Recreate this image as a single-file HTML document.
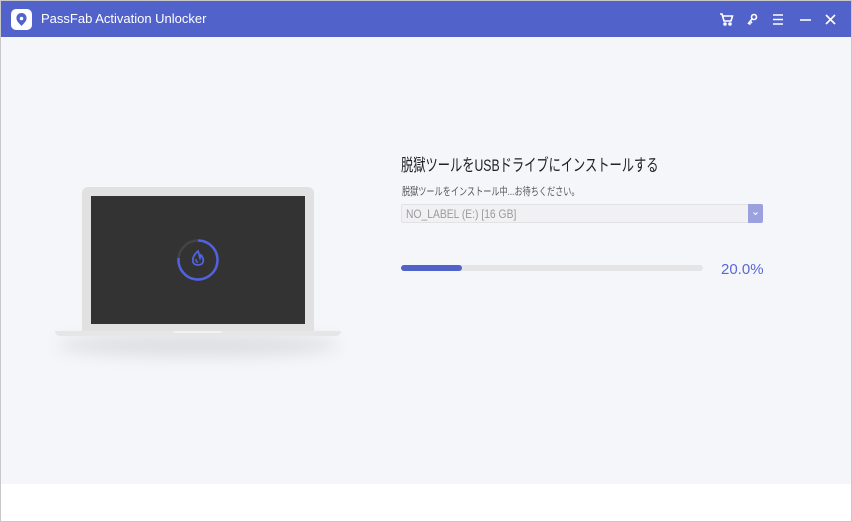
<!DOCTYPE html>
<html><head><meta charset="utf-8"><style>
*{margin:0;padding:0;box-sizing:border-box}
body{width:852px;height:522px;background:#c8c8c8;font-family:"Liberation Sans","Noto Sans CJK JP",sans-serif;position:relative;overflow:hidden}
.win{position:absolute;left:1px;top:1px;width:850px;height:520px;background:#fff}
.hd{position:absolute;left:0;top:0;width:850px;height:36px;background:#5162cb;color:#fff}
.logo{position:absolute;left:10px;top:8px;width:21px;height:21px;background:#fff;border-radius:5px}
.title{position:absolute;left:40px;top:10px;font-size:13px}
.main{position:absolute;left:0;top:36px;width:850px;height:447px;background:#f5f6fa}
.t{position:absolute;color:#222;white-space:nowrap;transform-origin:0 0}
</style></head><body><div class="win">
<div class="hd">
<div class="logo"><svg width="21" height="21"><path d="M10.5 4 C7 4 5 7 5.5 10 C6 13 9 15 10.5 17 C12 15 15 13 15.5 10 C16 7 14 4 10.5 4Z" fill="#5162cb"/><circle cx="10.5" cy="9.5" r="1.8" fill="#fff"/></svg></div>
<div class="title">PassFab Activation Unlocker</div>
<svg style="position:absolute;left:716px;top:10px" width="120" height="18" fill="none" stroke="#fff" stroke-width="1.6">
<path d="M3 3h2l2 7h7l1.5-5H6"/><circle cx="8" cy="13" r="1" fill="#fff"/><circle cx="13" cy="13" r="1" fill="#fff"/>
<circle cx="37" cy="6" r="2.5"/><path d="M35 8l-4 5M32 12l1.5 1.5M33.5 10.5l1.5 1.5"/>
<path d="M56 4h10M56 8.5h10M56 13h10"/>
<path d="M83 9h11"/>
<path d="M109 4l9 9M118 4l-9 9"/>
</svg>
</div>
<div class="main">
<div style="position:absolute;left:56px;top:296px;width:282px;height:24px;border-radius:50%;background:rgba(0,0,0,0.09);filter:blur(8px)"></div>
<div style="position:absolute;left:81px;top:150px;width:232px;height:145px;background:#e1e1e1;border-radius:6px 6px 0 0"></div>
<div style="position:absolute;left:90px;top:159px;width:214px;height:128px;background:#333"></div>
<div style="position:absolute;left:54px;top:294px;width:286px;height:5px;background:#e6e6e6;border-radius:0 0 8px 8px"></div>
<div style="position:absolute;left:173px;top:294px;width:48px;height:2px;background:#f2f2f2"></div>
<svg style="position:absolute;left:175px;top:201px" width="44" height="44" fill="none">
<circle cx="22" cy="22" r="19.5" stroke="#444" stroke-width="2.5"/>
<path d="M22 2.5 A19.5 19.5 0 1 1 2.6 20" stroke="#5162e0" stroke-width="2.5"/>
<path d="M22 13 C19 16 16 19 17 24 C18 28 26 28 27 24 C28 21 26 18 25 17 L24 20 C23 17 23 15 22 13Z" stroke="#5162e0" stroke-width="1.8"/>
<path d="M20 21 C19.5 23 21 24 22 24.5" stroke="#5162e0" stroke-width="1.5"/>
</svg>
<div class="t" style="left:400px;top:114px;font-size:17px;transform:scaleX(0.72)">脱獄ツールをUSBドライブにインストールする</div>
<div class="t" style="left:401px;top:146px;font-size:11px;color:#555;transform:scaleX(0.74)">脱獄ツールをインストール中...お待ちください。</div>
<div style="position:absolute;left:400px;top:167px;width:362px;height:19px;border:1px solid #e2e2e6;background:#f1f1f4;border-radius:2px"></div>
<div class="t" style="left:405px;top:170px;font-size:12px;color:#999;transform:scaleX(0.86)">NO_LABEL (E:) [16 GB]</div>
<div style="position:absolute;left:747px;top:167px;width:15px;height:19px;background:#9ba1de;border-radius:0 2px 2px 0"><svg width="15" height="19"><path d="M5.5 8.5l2 2 2-2" stroke="#fff" fill="none" stroke-width="1"/></svg></div>
<div style="position:absolute;left:400px;top:228px;width:302px;height:6px;background:#e5e5e8;border-radius:3px"></div>
<div style="position:absolute;left:400px;top:228px;width:61px;height:6px;background:#5162cb;border-radius:3px"></div>
<div class="t" style="left:720px;top:224px;font-size:15px;color:#5a67d8">20.0%</div>
</div>
</div></body></html>
